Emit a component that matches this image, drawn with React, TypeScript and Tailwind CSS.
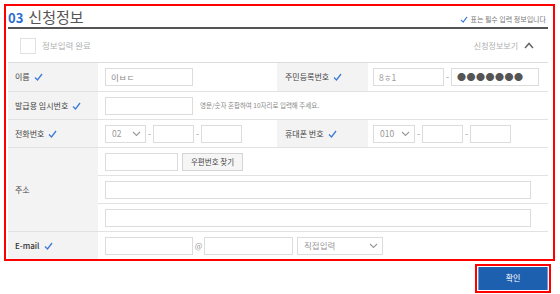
import React from "react";

const font = { fontFamily: '"Noto Sans CJK KR", "Noto Sans", sans-serif' };

function Check() {
  return (
    <svg width="9" height="8" viewBox="0 0 9 8" className="inline-block ml-[4px]">
      <polyline points="1,4.5 3.5,7 8,1" fill="none" stroke="#3f7bd6" strokeWidth="1.3" />
    </svg>
  );
}

function Chevron({ className = "" }: { className?: string }) {
  return (
    <svg width="9" height="6" viewBox="0 0 9 6" className={className}>
      <polyline points="1,1 4.5,4.5 8,1" fill="none" stroke="#999" strokeWidth="1.1" />
    </svg>
  );
}

function Input({ w, children }: { w: string; children?: React.ReactNode }) {
  return (
    <div className={`${w} h-[18px] border border-[#dcdcdc] bg-white flex items-center px-[5px] text-[8.5px] text-[#999]`}>
      {children}
    </div>
  );
}

function Select({ w, label }: { w: string; label: string }) {
  return (
    <div className={`${w} h-[18px] border border-[#dcdcdc] bg-white flex items-center justify-between pl-[6px] pr-[4px] text-[8.5px] text-[#999]`}>
      <span>{label}</span>
      <Chevron />
    </div>
  );
}

function Dash() {
  return <span className="w-[7px] text-center text-[9px] text-[#999]">-</span>;
}

function Label({ children, w = "w-[90px]", pl = "pl-[7px]" }: { children: React.ReactNode; w?: string; pl?: string }) {
  return (
    <div className={`${w} ${pl} shrink-0 bg-[#f3f3f3] flex items-center text-[8px] text-[#444]`}>{children}</div>
  );
}

export default function App() {
  return (
    <div className="w-[560px] h-[294px] bg-white overflow-hidden" style={font}>
      <div className="ml-[4px] mt-[4px] w-[551px] border-2 border-[#ff0000] pl-[2px] pr-[5px]">
        {/* title */}
        <div className="h-[23px] border-b-2 border-[#555] flex items-center justify-between">
          <div className="flex items-baseline gap-[5px] leading-none">
            <span className="text-[13px] font-bold text-[#2a6dd0]">03</span>
            <span className="text-[15px] text-[#555]">신청정보</span>
          </div>
          <div className="flex items-center text-[7px] text-[#777] pr-[2px] pt-[6px]">
            <svg width="8" height="7" viewBox="0 0 9 8" className="mr-[2px]">
              <polyline points="1,4.5 3.5,7 8,1" fill="none" stroke="#3f7bd6" strokeWidth="1.3" />
            </svg>
            표는 필수 입력 정보입니다
          </div>
        </div>

        {/* completion row */}
        <div className="h-[34px] border-b border-[#dcdcdc] flex items-center justify-between">
          <div className="flex items-center pl-[12px]">
            <div className="w-[16px] h-[16px] border border-[#e2e2e2] bg-white" />
            <span className="ml-[6px] text-[8.5px] text-[#b0b0b0]">정보입력 완료</span>
          </div>
          <div className="flex items-center pr-[14px] text-[8px] text-[#b0b0b0]">
            신청정보보기
            <svg width="10" height="7" viewBox="0 0 10 7" className="ml-[6px]">
              <polyline points="1,6 5,1.5 9,6" fill="none" stroke="#666" strokeWidth="1.5" />
            </svg>
          </div>
        </div>

        {/* name / rrn */}
        <div className="h-[29px] border-b border-[#e2e2e2] flex">
          <Label>이름<Check /></Label>
          <div className="w-[179px] pl-[7px] flex items-center">
            <Input w="w-[88px]">
              <span className="text-[#888]">이ㅂㄷ</span>
            </Input>
          </div>
          <Label w="w-[91px]" pl="pl-[8px]">주민등록번호<Check /></Label>
          <div className="flex-1 pl-[5px] flex items-center">
            <Input w="w-[71px]">8ㅎ1</Input>
            <Dash />
            <Input w="w-[88px]">
              <span className="text-[#555] text-[9px] tracking-[0.5px]">●●●●●●●</span>
            </Input>
          </div>
        </div>

        {/* temp number */}
        <div className="h-[28px] border-b border-[#e2e2e2] flex">
          <Label>발급용 임시번호<Check /></Label>
          <div className="flex-1 pl-[7px] flex items-center">
            <Input w="w-[88px]" />
            <span className="ml-[7px] text-[6.5px] text-[#888]">영문/숫자 혼합하여 10자리로 입력해 주세요.</span>
          </div>
        </div>

        {/* phones */}
        <div className="h-[28px] border-b border-[#e2e2e2] flex">
          <Label>전화번호<Check /></Label>
          <div className="w-[179px] pl-[7px] flex items-center">
            <Select w="w-[41px]" label="02" />
            <Dash />
            <Input w="w-[41px]" />
            <Dash />
            <Input w="w-[41px]" />
          </div>
          <Label w="w-[91px]" pl="pl-[8px]">휴대폰 번호<Check /></Label>
          <div className="flex-1 pl-[5px] flex items-center">
            <Select w="w-[42px]" label="010" />
            <Dash />
            <Input w="w-[41px]" />
            <Dash />
            <Input w="w-[41px]" />
          </div>
        </div>

        {/* address */}
        <div className="border-b border-[#e2e2e2] flex">
          <Label>주소</Label>
          <div className="flex-1 flex flex-col">
            <div className="h-[28px] border-b border-[#e2e2e2] pl-[7px] flex items-center">
              <Input w="w-[73px]" />
              <div className="ml-[4px] w-[61px] h-[18px] border border-[#d4d4d4] bg-[#f6f6f6] flex items-center justify-center text-[7.5px] text-[#444]">
                우편번호 찾기
              </div>
            </div>
            <div className="h-[28px] border-b border-[#e2e2e2] pl-[7px] flex items-center">
              <Input w="w-[426px]" />
            </div>
            <div className="h-[27px] pl-[7px] flex items-center">
              <Input w="w-[426px]" />
            </div>
          </div>
        </div>

        {/* email */}
        <div className="h-[27px] flex">
          <Label>
            <span className="text-[#333] font-medium">E-mail</span>
            <Check />
          </Label>
          <div className="flex-1 pl-[7px] flex items-center">
            <Input w="w-[88px]" />
            <span className="w-[11px] text-center text-[8px] text-[#999]">@</span>
            <Input w="w-[89px]" />
            <div className="ml-[4px]">
              <Select w="w-[86px]" label="직접입력" />
            </div>
          </div>
        </div>
      </div>

      {/* confirm */}
      <div className="h-[34px] border-b border-[#eeeeee] flex justify-end items-center pr-[9px] pt-[1px]">
        <div className="border-2 border-[#ff0000] p-[1px]">
          <button className="w-[70px] h-[23px] bg-[#1d60b0] border-x border-[#6d9bd3] text-white text-[8px] flex items-center justify-center">
            확인
          </button>
        </div>
      </div>
    </div>
  );
}
